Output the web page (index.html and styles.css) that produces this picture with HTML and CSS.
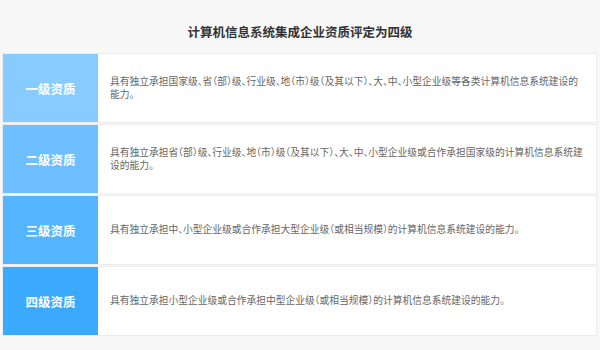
FILE: index.html
```html
<!DOCTYPE html>
<html lang="zh-CN">
<head>
<meta charset="utf-8">
<title>计算机信息系统集成企业资质评定</title>
<link rel="stylesheet" href="styles.css">
</head>
<body>
<main class="page">
  <h1 class="title">计算机信息系统集成企业资质评定为四级</h1>
  <ul class="levels">
    <li class="level level-1">
      <div class="level-name">一级资质</div>
      <p class="level-desc">具有独立承担国家级、省（部）级、行业级、地（市）级（及其以下）、大、中、小型企业级等各类计算机信息系统建设的能力。</p>
    </li>
    <li class="level level-2">
      <div class="level-name">二级资质</div>
      <p class="level-desc">具有独立承担省（部）级、行业级、地（市）级（及其以下）、大、中、小型企业级或合作承担国家级的计算机信息系统建设的能力。</p>
    </li>
    <li class="level level-3">
      <div class="level-name">三级资质</div>
      <p class="level-desc">具有独立承担中、小型企业级或合作承担大型企业级（或相当规模）的计算机信息系统建设的能力。</p>
    </li>
    <li class="level level-4">
      <div class="level-name">四级资质</div>
      <p class="level-desc">具有独立承担小型企业级或合作承担中型企业级（或相当规模）的计算机信息系统建设的能力。</p>
    </li>
  </ul>
</main>
</body>
</html>
```

FILE: styles.css
```css
html, body {
  margin: 0;
  padding: 0;
  background: #f7f7f7;
}

body {
  font-family: "Noto Sans CJK SC", "Noto Sans", sans-serif;
  width: 600px;
  height: 350px;
  overflow: hidden;
}

.page {
  padding: 25px 3px 0 3px;
}

.title {
  margin: 0 0 15px 0;
  text-align: center;
  font-size: 12.5px;
  line-height: 14px;
  font-weight: 700;
  color: #333;
}

.levels {
  list-style: none;
  margin: 0;
  padding: 0;
  display: flex;
  flex-direction: column;
  gap: 3px;
}

.level {
  display: flex;
  height: 68px;
  width: 593px;
  background: #fff;
  box-shadow: 0 0 0 1px #ececec;
}

.level-name {
  flex: 0 0 95px;
  display: flex;
  align-items: center;
  justify-content: center;
  color: #fff;
  font-size: 12.5px;
  font-weight: 700;
}

.level-1 .level-name { background: #88cbff; }
.level-2 .level-name { background: #6dbfff; }
.level-3 .level-name { background: #54b4fe; }
.level-4 .level-name { background: #3ba9fd; }

/* punctuation set half-width so the description lines wrap like the design */
.level-desc {
  flex: 1;
  margin: 0;
  padding: 0 9px 0 12px;
  align-self: center;
  font-size: 9.75px;
  line-height: 13.5px;
  color: #666;
  font-feature-settings: "halt";
}
```
